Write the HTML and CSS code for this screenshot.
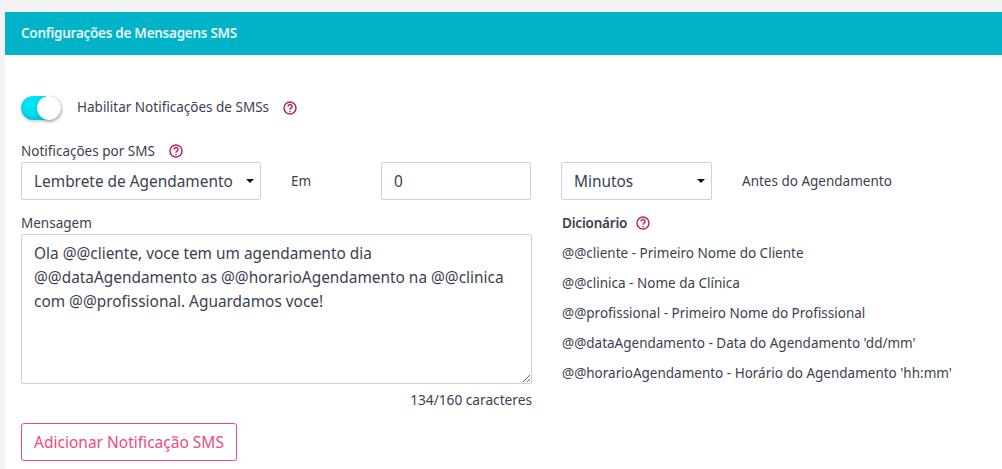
FILE: index.html
```html
<!DOCTYPE html>
<html lang="pt-BR">

<head>
  <title>Configurações de Mensagens SMS</title>
  <meta charset="UTF-8">
  <link rel="stylesheet" href="styles.css">
</head>

<body>
  <div class="card">
    <div class="card-header">Configurações de Mensagens SMS</div>

    <div class="card-body">
      <div class="toggle-row">
        <label class="switch">
          <input type="checkbox" checked>
          <span class="slider"></span>
        </label>
        <span class="toggle-label">Habilitar Notificações de SMSs</span>
        <svg class="help" viewBox="0 0 14 14">
          <circle cx="7" cy="7" r="6"></circle>
          <path d="M5 5.5a2 2 0 1 1 3 1.7c-.7.4-1 .8-1 1.5"></path>
          <path d="M7 10v1.2"></path>
        </svg>
      </div>

      <div class="field-label">
        Notificações por SMS
        <svg class="help" viewBox="0 0 14 14">
          <circle cx="7" cy="7" r="6"></circle>
          <path d="M5 5.5a2 2 0 1 1 3 1.7c-.7.4-1 .8-1 1.5"></path>
          <path d="M7 10v1.2"></path>
        </svg>
      </div>

      <div class="when-row">
        <div class="select-wrap select-type">
          <select class="control">
            <option>Lembrete de Agendamento</option>
          </select>
        </div>
        <span class="when-text when-em">Em</span>
        <input class="control input-amount" type="text" value="0">
        <div class="select-wrap select-unit">
          <select class="control">
            <option>Minutos</option>
          </select>
        </div>
        <span class="when-text">Antes do Agendamento</span>
      </div>

      <div class="message-row">
        <div class="message-col">
          <div class="field-label message-label">Mensagem</div>
          <textarea class="message-box">Ola @@cliente, voce tem um agendamento dia @@dataAgendamento as @@horarioAgendamento na @@clinica com @@profissional. Aguardamos voce!</textarea>
          <div class="counter">134/160 caracteres</div>
        </div>

        <div class="dict-col">
          <div class="dict-title">
            Dicionário
            <svg class="help" viewBox="0 0 14 14">
              <circle cx="7" cy="7" r="6"></circle>
              <path d="M5 5.5a2 2 0 1 1 3 1.7c-.7.4-1 .8-1 1.5"></path>
              <path d="M7 10v1.2"></path>
            </svg>
          </div>
          <p>@@cliente - Primeiro Nome do Cliente</p>
          <p>@@clinica - Nome da Clínica</p>
          <p>@@profissional - Primeiro Nome do Profissional</p>
          <p>@@dataAgendamento - Data do Agendamento 'dd/mm'</p>
          <p>@@horarioAgendamento - Horário do Agendamento 'hh:mm'</p>
        </div>
      </div>

      <button class="btn-add" type="button">Adicionar Notificação SMS</button>
    </div>
  </div>
</body>

</html>
```

FILE: styles.css
```css
* {
  box-sizing: border-box;
}

body {
  margin: 0;
  height: 469px;
  overflow: hidden;
  padding: 12px 0 0 5px;
  background-color: #f3f3f3;
  font-family: "Noto Sans", Arial, sans-serif;
  font-size: 13.5px;
  color: #3a3f51;
}

/* Card */
.card {
  background-color: #fff;
  height: 457px;
  border-radius: 2px 0 0 0;
}

.card-header {
  height: 43px;
  padding-left: 16px;
  line-height: 43px;
  font-size: 13.5px;
  letter-spacing: -.27px;
  font-weight: 600;
  color: #e6f7fa;
  background-color: #00b3c8;
}

.card-body {
  padding: 41px 16px 0;
}

/* Toggle */
.toggle-row {
  display: flex;
  align-items: center;
  height: 24px;
}

.switch {
  position: relative;
  display: inline-block;
  width: 40px;
  height: 24px;
}

.switch input {
  opacity: 0;
  width: 0;
  height: 0;
}

.slider {
  position: absolute;
  top: 0;
  left: 0;
  right: 0;
  bottom: 0;
  border-radius: 12px;
  background-color: #00e1f5;
  box-shadow: inset 0 -8px 8px -6px rgba(0, 150, 170, .5), 1px 2px 3px rgba(0, 0, 0, .18);
}

.slider:before {
  position: absolute;
  content: "";
  top: 0;
  right: 0;
  width: 24px;
  height: 24px;
  border-radius: 50%;
  background-color: #fff;
  box-shadow: 0 1px 3px rgba(0, 0, 0, .25);
}

.toggle-label {
  margin-left: 16px;
  margin-right: 14px;
  padding-bottom: 2px;
}

.help {
  width: 14px;
  height: 14px;
  vertical-align: -2px;
  fill: none;
  stroke: #b8255f;
  stroke-width: 1.5;
}

.field-label {
  margin-top: 21px;
  height: 21px;
  line-height: 20px;
}

.field-label .help {
  margin-left: 11px;
}

/* Select row */
.when-row {
  display: flex;
  align-items: center;
  gap: 30px;
}

.control {
  display: block;
  width: 100%;
  height: 38px;
  padding: 0 12px;
  border: 1px solid #ccd1da;
  border-radius: 2px;
  background-color: #fff;
  font-family: inherit;
  font-size: 15.4px;
  color: #3a3f51;
  appearance: none;
}

.select-wrap {
  position: relative;
}

/* small arrow of the select */
.select-wrap:after {
  position: absolute;
  content: "";
  top: 17px;
  right: 7px;
  border-left: 4px solid transparent;
  border-right: 4px solid transparent;
  border-top: 4px solid #111;
}

.select-type {
  width: 240px;
}

.select-unit {
  width: 151px;
}

.when-em {
  width: 60px;
}

.input-amount {
  width: 150px;
}

/* Message and dictionary */
.message-row {
  display: flex;
  gap: 30px;
  margin-top: 13px;
}

.message-col {
  width: 511px;
}

.message-label {
  margin-top: 0;
}

.message-box {
  display: block;
  width: 100%;
  height: 150px;
  padding: 7px 12px;
  border: 1px solid #ccd1da;
  border-radius: 2px;
  font-family: inherit;
  font-size: 15.4px;
  line-height: 24px;
  color: #3a3f51;
}

.counter {
  margin-top: 6px;
  height: 22px;
  text-align: right;
  line-height: 20px;
  font-size: 13.7px;
}

.dict-col {
  width: 400px;
}

.dict-title {
  height: 21px;
  line-height: 20px;
  font-size: 13.5px;
  letter-spacing: -.2px;
  font-weight: 600;
}

.dict-title .help {
  margin-left: 6px;
}

.dict-col p {
  margin: 0;
  height: 30px;
  line-height: 30px;
  white-space: nowrap;
}

.dict-col p:first-of-type {
  margin-top: 4px;
}

/* Button */
.btn-add {
  display: block;
  width: 216px;
  height: 38px;
  margin-top: 11px;
  padding: 0;
  border: 1px solid #ec4a80;
  border-radius: 3px;
  background-color: #fff;
  font-family: inherit;
  font-size: 15.5px;
  color: #ec4a80;
}
```
